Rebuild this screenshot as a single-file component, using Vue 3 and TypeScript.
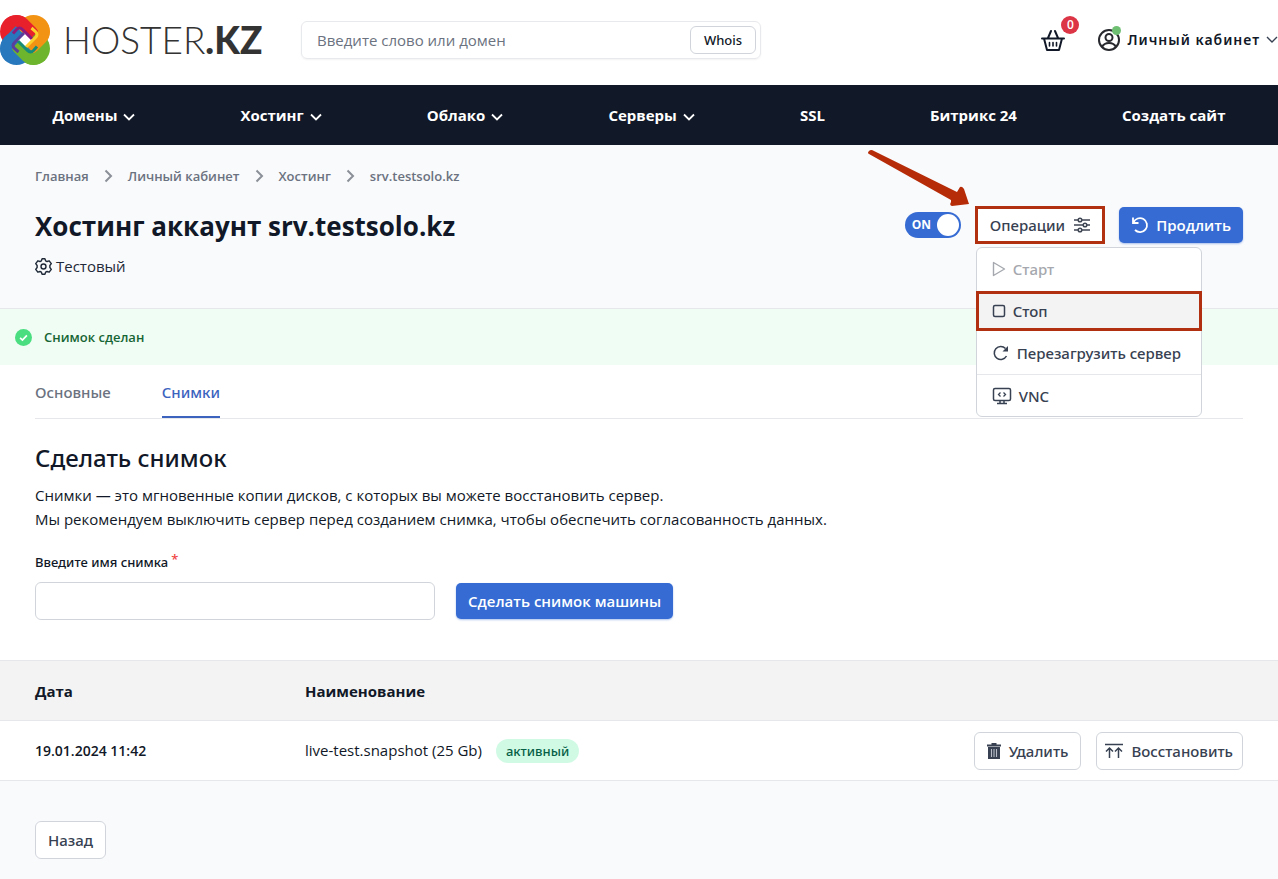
<script setup lang="ts">
import { ref } from 'vue'

interface NavItem { title: string; menu: boolean }
interface Snapshot { date: string; name: string; status: string }
interface Petal { color: string; stripe: string; turn: string }

const nav: NavItem[] = [
  { title: 'Домены', menu: true },
  { title: 'Хостинг', menu: true },
  { title: 'Облако', menu: true },
  { title: 'Серверы', menu: true },
  { title: 'SSL', menu: false },
  { title: 'Битрикс 24', menu: false },
  { title: 'Создать сайт', menu: false },
]
const petals: Petal[] = [
  { color: '#e8202b', stripe: '#8d1b7d', turn: 'rotate(0 25 25)' },
  { color: '#f39314', stripe: '#fcd02a', turn: 'rotate(90 25 25)' },
  { color: '#6db52d', stripe: '#168b75', turn: 'rotate(180 25 25)' },
  { color: '#2778bd', stripe: '#5a3f9c', turn: 'rotate(270 25 25)' },
]
const crumbs: string[] = ['Главная', 'Личный кабинет', 'Хостинг', 'srv.testsolo.kz']
const tabs: string[] = ['Основные', 'Снимки']
const activeTab = ref('Снимки')
const power = ref(true)
const query = ref('')
const snapshotName = ref('')
const snapshots: Snapshot[] = [
  { date: '19.01.2024 11:42', name: 'live-test.snapshot (25 Gb)', status: 'активный' },
]
</script>

<template>
  <div class="page">
    <header class="top">
      <a href="#" class="logo" aria-label="HOSTER.KZ">
        <svg class="logo-mark" viewBox="0 0 50 50" fill="none" aria-hidden="true">
          <circle v-for="p in petals" :key="'lobe' + p.color" :transform="p.turn" :fill="p.color" cx="16.500" cy="16.500" r="16.500" />
          <path v-for="p in petals" :key="'band' + p.color" :transform="p.turn" :stroke="p.color" stroke-width="12" d="M9 9.500A10.500 10.500 0 0 1 23.500 9L34.500 20" />
          <path d="M25 17.500L32.500 25 25 32.500 17.500 25Z" fill="#fff" />
          <path v-for="p in petals" :key="'stripe' + p.color" :transform="p.turn" :stroke="p.stripe" stroke-width="3" d="M13 18.500L16.500 14.500Q19.500 11.500 22.500 14.500L32 24" />
        </svg>
        <span class="logo-text">HOSTER<b>.KZ</b></span>
      </a>
      <form class="search" @submit.prevent>
        <input v-model="query" type="text" placeholder="Введите слово или домен" aria-label="Введите слово или домен" />
        <button type="submit" class="whois">Whois</button>
      </form>
      <div class="account">
        <a href="#" class="basket" aria-label="Корзина">
          <svg viewBox="0 0 26 26" width="26" height="26" fill="none" stroke="#111827" stroke-width="2" stroke-linecap="round" stroke-linejoin="round" aria-hidden="true">
            <path d="M2 11.500h22M4 11.500l3 11.500h12l3-11.500M8 11l3-7M18 11l-3-7" />
            <path d="M9.500 15.500v3.500M13 15.500v3.500M16.500 15.500v3.500" stroke-width="1.600" />
          </svg>
          <span class="count">0</span>
        </a>
        <button type="button" class="cabinet">
          <span class="avatar">
            <svg viewBox="0 0 24 24" width="24" height="24" fill="none" stroke="#27292e" stroke-width="2" aria-hidden="true">
              <circle cx="12" cy="12" r="10" /><circle cx="12" cy="9.500" r="3.500" />
              <path d="M5 19c1.500-3 4-4 7-4s5.500 1 7 4" />
            </svg>
            <i class="online"></i>
          </span>
          <span>Личный кабинет</span>
          <svg viewBox="0 0 12 8" width="12" height="8" fill="none" stroke="#374151" stroke-width="1.400" aria-hidden="true"><path d="M1 1l5 5 5-5" /></svg>
        </button>
      </div>
    </header>

    <nav class="main-nav">
      <a v-for="item in nav" :key="item.title" href="#">
        {{ item.title }}
        <svg v-if="item.menu" viewBox="0 0 12 8" width="12" height="8" fill="none" stroke="#fff" stroke-width="1.800" aria-hidden="true"><path d="M1 1.500l5 5 5-5" /></svg>
      </a>
    </nav>

    <section class="hero">
      <nav class="crumbs">
        <template v-for="(c, i) in crumbs" :key="c">
          <svg v-if="i > 0" viewBox="0 0 9 14" width="9" height="14" fill="none" stroke="#8b8f97" stroke-width="2" aria-hidden="true"><path d="M1.500 1.500L7 7l-5.500 5.500" /></svg>
          <a href="#">{{ c }}</a>
        </template>
      </nav>
      <div class="hero-row">
        <h1>Хостинг аккаунт srv.testsolo.kz</h1>
        <div class="actions">
          <label class="toggle">
            <input v-model="power" type="checkbox" aria-label="Питание сервера" />
            <span>ON</span><span class="knob"></span>
          </label>
          <div class="ops">
            <svg class="arrow" viewBox="0 0 104 62" width="104" height="62" aria-hidden="true">
              <path d="M3 3Q5 1 8 3L91 44L94 39Q96 38 98 41L103 56L86 58Q83 57 85 54L85 52L3 6Q1 5 3 3Z" fill="#b62c08" />
            </svg>
            <button type="button" class="ops-button">
              Операции
              <svg viewBox="0 0 18 18" width="18" height="18" fill="none" stroke="#3f4654" stroke-width="1.500" aria-hidden="true">
                <path d="M1 4h4M9 4h8M1 9h9M14 9h3M1 14h4M9 14h8" /><circle cx="7" cy="4" r="1.800" /><circle cx="12" cy="9" r="1.800" /><circle cx="7" cy="14" r="1.800" />
              </svg>
            </button>
            <div class="menu">
              <button type="button" disabled>
                <svg viewBox="0 0 14 16" width="14" height="16" fill="none" stroke="currentColor" stroke-width="1.400" stroke-linejoin="round" aria-hidden="true"><path d="M1.500 1.500v13L12.500 8z" /></svg>
                Старт
              </button>
              <button type="button" class="marked">
                <svg viewBox="0 0 14 14" width="14" height="14" fill="none" stroke="currentColor" stroke-width="1.500" aria-hidden="true"><rect x="1.500" y="1.500" width="11" height="11" rx="1.500" /></svg>
                Стоп
              </button>
              <button type="button">
                <svg viewBox="0 0 18 18" width="18" height="18" fill="none" stroke="currentColor" stroke-width="1.500" aria-hidden="true"><path d="M14.500 12A6.500 6.500 0 1 1 13.500 4.500" /><path d="M16 2v5.500h-5.500z" fill="currentColor" stroke="none" /></svg>
                Перезагрузить сервер
              </button>
              <button type="button" class="divided">
                <svg viewBox="0 0 20 18" width="20" height="18" fill="none" stroke="currentColor" stroke-width="1.500" aria-hidden="true"><rect x="1.500" y="1.500" width="17" height="12" rx="1.500" /><path d="M8.500 5.500l-2 2 2 2M11.500 5.500l2 2-2 2" stroke-width="1.300" /><path d="M8 13.500v3M12 13.500v3M5 16.500h10" /></svg>
                VNC
              </button>
            </div>
          </div>
          <button type="button" class="primary renew">
            <svg viewBox="0 0 18 18" width="18" height="18" fill="none" stroke="#fff" stroke-width="1.800" aria-hidden="true"><path d="M2 1.500v5.500h5.500M2.500 6.500A7 7 0 1 1 4 14" /></svg>
            Продлить
          </button>
        </div>
      </div>
      <p class="plan">
        <svg viewBox="0 0 24 24" width="17" height="17" fill="none" stroke="#1f2937" stroke-width="2" stroke-linejoin="round" aria-hidden="true"><path d="M9 4l1-3h4l1 3 2 1 3-1 3 4-2 2.500v3L23 16l-3 4-3-1-2 1-1 3h-4l-1-3-2-1-3 1-3-4 2-2.500v-3L1 8l3-4 3 1z" /><circle cx="12" cy="12" r="3.500" /></svg>
        Тестовый
      </p>
    </section>

    <div class="alert" role="status">
      <svg viewBox="0 0 16 16" width="17" height="17" aria-hidden="true"><circle cx="8" cy="8" r="8" fill="#4ade80" /><path d="M4.800 8.300l2.200 2.100 4.200-4.400" fill="none" stroke="#fff" stroke-width="1.600" /></svg>
      Снимок сделан
    </div>

    <main class="content">
      <div class="tabs" role="tablist">
        <button v-for="t in tabs" :key="t" type="button" role="tab" :aria-selected="t === activeTab" :class="{ active: t === activeTab }" @click="activeTab = t">{{ t }}</button>
      </div>
      <h2>Сделать снимок</h2>
      <p class="lead">Снимки — это мгновенные копии дисков, с которых вы можете восстановить сервер.<br />Мы рекомендуем выключить сервер перед созданием снимка, чтобы обеспечить согласованность данных.</p>
      <form @submit.prevent>
        <label for="snapshot-name">Введите имя снимка<span class="required">*</span></label>
        <div class="field-row">
          <input id="snapshot-name" v-model="snapshotName" type="text" />
          <button type="submit" class="primary">Сделать снимок машины</button>
        </div>
      </form>
    </main>

    <table>
      <thead>
        <tr><th class="date">Дата</th><th colspan="2">Наименование</th></tr>
      </thead>
      <tbody>
        <tr v-for="s in snapshots" :key="s.name">
          <td class="date">{{ s.date }}</td>
          <td>{{ s.name }}<span class="status">{{ s.status }}</span></td>
          <td class="row-actions">
            <div>
              <button type="button" class="outline">
                <svg viewBox="0 0 14 16" width="14" height="16" aria-hidden="true"><path d="M0 1.500h4.500V0h5v1.500H14v2H0z" fill="#374151" /><path d="M1 4h12v12H1z" fill="#374151" /><path d="M4.500 6v8M7 6v8M9.500 6v8" stroke="#b9bdc9" stroke-width="1.100" /></svg>
                Удалить
              </button>
              <button type="button" class="outline restore">
                <svg viewBox="0 0 18 16" width="18" height="16" fill="none" stroke="#374151" stroke-width="1.500" aria-hidden="true"><path d="M0 1.500h18M4.500 15V5M1 8.500L4.500 5 8 8.500M13.500 15V5M10 8.500L13.500 5 17 8.500" /></svg>
                Восстановить
              </button>
            </div>
          </td>
        </tr>
      </tbody>
    </table>

    <footer><button type="button" class="outline">Назад</button></footer>
  </div>
</template>

<style>
body { background: #f9fafc; }
</style>

<style scoped>
* { box-sizing: border-box; }
.page { font-family: "Open Sans", "Noto Sans", sans-serif; font-size: 15px; line-height: 24px; color: #111827; }
a { color: inherit; text-decoration: none; }
button, input { font: inherit; color: inherit; margin: 0; }
button { display: flex; align-items: center; border: 0; background: none; padding: 0; white-space: nowrap; }
svg { flex: none; display: block; }
h1, h2, p { margin: 0; }

.top { display: flex; align-items: center; height: 85px; padding-bottom: 5px; background: #fff; }
.logo { display: flex; align-items: center; gap: 13px; width: 301px; }
.logo-mark { width: 50px; height: 50px; }
.logo-text { font-family: Lato, sans-serif; font-size: 37px; line-height: 40px; font-weight: 300; color: #333; }
.logo-text b { font-weight: 900; }
.search { display: flex; align-items: center; width: 460px; height: 38px; padding: 0 4px 0 15px; border: 1px solid #e8e9ec; border-radius: 6px; box-shadow: 0 1px 2px #0000000d; }
.search input { flex: 1; min-width: 0; border: 0; outline: 0; padding: 0; background: none; font-size: 15px; }
.search input::placeholder { color: #6b7280; opacity: 1; }
.whois { justify-content: center; width: 66px; height: 28px; border: 1px solid #d1d5db; border-radius: 6px; font-family: "Noto Sans", sans-serif; font-size: 13px; font-weight: 500; }
.account { display: flex; align-items: center; gap: 31px; margin-left: auto; }
.basket { position: relative; }
.count { position: absolute; left: 21px; top: -11px; width: 18px; height: 18px; border-radius: 50%; background: #dc3545; color: #fff; font-size: 12px; line-height: 18px; text-align: center; font-weight: 600; }
.cabinet { gap: 6px; font-family: "Noto Sans", sans-serif; font-size: 14px; font-weight: 600; letter-spacing: 1px; }
.avatar { position: relative; }
.online { position: absolute; right: 0; top: -2px; width: 9px; height: 9px; border-radius: 50%; background: #6fbf73; }

.main-nav { display: flex; justify-content: space-around; align-items: center; height: 60px; background: #111827; color: #fff; font-size: 15px; font-weight: 700; }
.main-nav a { display: flex; align-items: center; gap: 6px; }
.main-nav svg { margin-top: 3px; }

.hero { height: 164px; padding: 19px 35px 0; background: #f9fafc; border-bottom: 1px solid #e5e7eb; }
.crumbs { display: flex; align-items: center; gap: 15px; color: #6b7280; font-size: 13px; font-weight: 600; }
.hero-row { display: flex; align-items: center; justify-content: space-between; height: 36px; margin-top: 19px; }
h1 { padding-top: 2px; font-size: 26px; line-height: 36px; font-weight: 700; }
.actions { display: flex; align-items: center; gap: 14px; }
.toggle { display: flex; align-items: center; justify-content: space-between; width: 56px; height: 26px; padding: 0 2px 0 7px; border-radius: 13px; background: #356bd3; color: #fff; font-size: 12px; font-weight: 700; position: relative; }
.toggle input { position: absolute; inset: 0; opacity: 0; width: 100%; height: 100%; }
.knob { width: 22px; height: 22px; border-radius: 50%; background: #fff; }
.ops { position: relative; }
.ops-button { gap: 8px; height: 38px; padding: 0 11px 0 12px; border: 3px solid #b0300f; background: #fff; color: #374151; font-family: "Noto Sans", sans-serif; font-weight: 500; }
.arrow { position: absolute; top: -58px; left: -109px; }
.menu { position: absolute; left: 1px; top: 41px; z-index: 2; width: 226px; background: #fff; border: 1px solid #d1d5db; border-radius: 6px; color: #374151; font-family: "Noto Sans", sans-serif; font-weight: 500; }
.menu button { width: 100%; height: 42px; padding: 0 15px; gap: 7px; }
.menu button:disabled { color: #a5a8ae; }
.menu .marked { width: 226px; height: 40px; margin: 1px -1px; border: 3px solid #b0300f; background: #f3f3f3; padding: 0 13px; }
.menu .divided { border-top: 1px solid #e5e7eb; }
.primary { justify-content: center; height: 36px; padding: 0 12px; border-radius: 5px; background: #356bd3; color: #fff; font-weight: 600; box-shadow: 0 1px 2px #356bd366; }
.renew { gap: 7px; }
.plan { display: flex; align-items: center; gap: 4px; margin-top: 11px; color: #1f2937; }

.alert { display: flex; align-items: center; gap: 12px; height: 56px; padding: 0 15px; background: #f0fdf4; color: #166534; font-size: 13px; font-weight: 600; }

.content { padding: 0 35px 40px; background: #fff; }
.tabs { display: flex; gap: 51px; border-bottom: 1px solid #e5e7eb; }
.tabs button { height: 53px; padding-top: 2px; color: #6b7280; font-family: "Noto Sans", sans-serif; font-weight: 500; border-bottom: 2px solid transparent; }
.tabs button.active { color: #3c64bf; border-bottom-color: #3c64bf; }
h2 { margin-top: 23px; font-family: "Noto Sans", sans-serif; font-size: 24px; line-height: 32px; font-weight: 500; }
.lead { margin-top: 9px; }
form label { display: block; margin-top: 19px; font-family: "Noto Sans", sans-serif; font-size: 13px; font-weight: 500; }
.required { color: #ef4444; margin-left: 3px; vertical-align: 3px; line-height: 1; }
.field-row { display: flex; align-items: center; gap: 21px; margin-top: 8px; }
.field-row input { width: 400px; height: 38px; padding: 0 12px; border: 1px solid #d1d5db; border-radius: 6px; }

table { width: 100%; border-collapse: collapse; background: #fff; }
th, td { height: 60px; padding: 0; text-align: left; border-top: 1px solid #e5e7eb; border-bottom: 1px solid #e5e7eb; }
th { background: #f3f3f3; font-weight: 700; }
.date { width: 305px; padding-left: 35px; }
td.date { font-size: 14px; font-weight: 600; }
.status { display: inline-block; margin-left: 14px; padding: 0 10px; border-radius: 13px; background: #d1fae5; color: #065f46; font-family: "Noto Sans", sans-serif; font-size: 13px; font-weight: 500; }
.row-actions { padding-right: 35px; }
.row-actions div { display: flex; justify-content: flex-end; gap: 15px; }
.outline { gap: 8px; height: 38px; padding: 0 12px; border: 1px solid #d1d5db; border-radius: 6px; background: #fff; color: #374151; font-family: "Noto Sans", sans-serif; font-weight: 500; }
.restore { padding: 0 9px 0 8px; }
footer { padding: 40px 35px 20px; }
</style>
